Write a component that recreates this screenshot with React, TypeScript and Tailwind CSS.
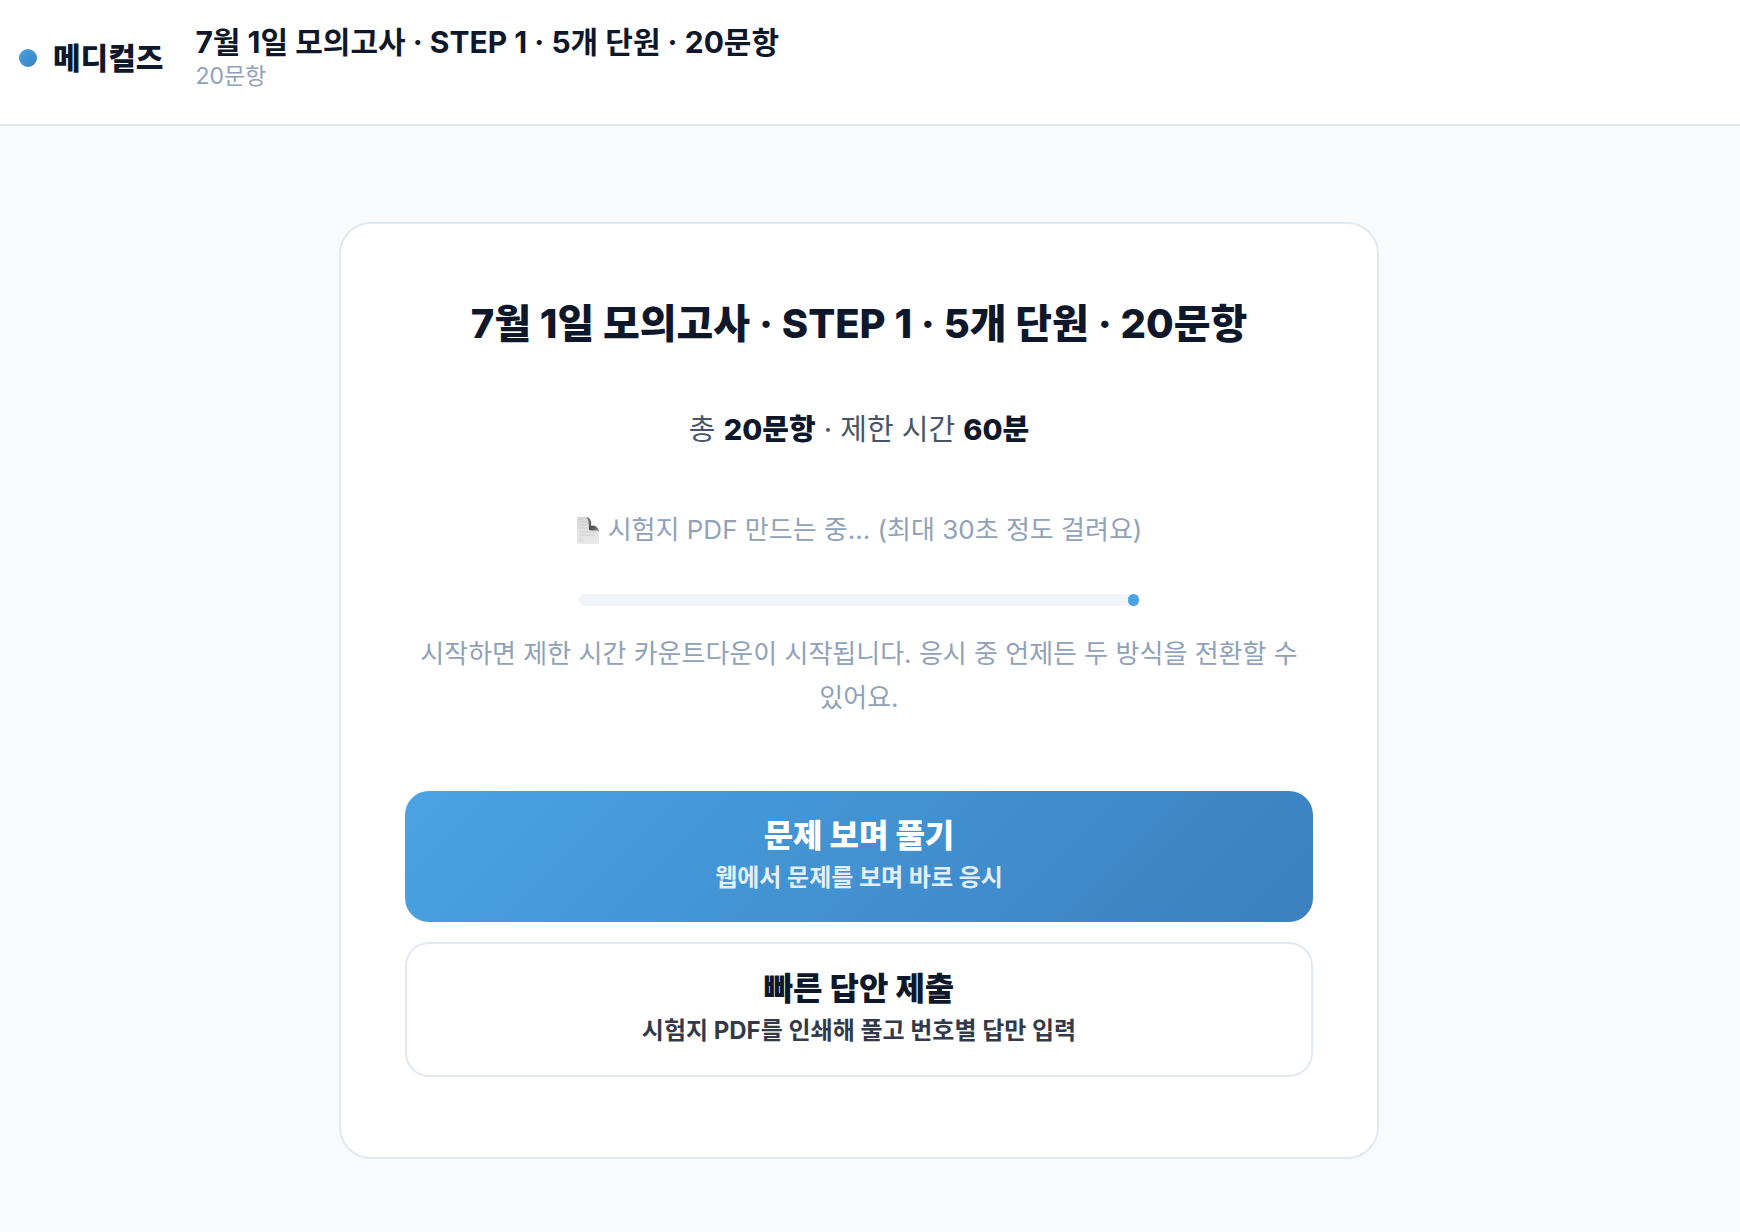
const exam = {
  title: "7월 1일 모의고사 · STEP 1 · 5개 단원 · 20문항",
  questions: "20문항",
  limit: "60분",
};

function PageIcon() {
  return (
    <svg width="24" height="27" viewBox="0 0 24 27" aria-hidden="true">
      <defs>
        <linearGradient id="sheet" x1="0" y1="0" x2="0" y2="1">
          <stop offset="0" stopColor="#d6d6d6" />
          <stop offset="0.5" stopColor="#e2e2e2" />
          <stop offset="1" stopColor="#e9e9e9" />
        </linearGradient>
        <linearGradient id="fold" x1="0" y1="0" x2="1" y2="1">
          <stop offset="0" stopColor="#8a8a8a" />
          <stop offset="0.6" stopColor="#4f4f4f" />
          <stop offset="1" stopColor="#8f8f8f" />
        </linearGradient>
      </defs>
      <path d="M1 0H11C14 2 15 5 15 8C19 8 22 10 23 13V27H1Z" fill="url(#sheet)" />
      <path
        d="M10 0C14 0 16 4 15 9C19 8 22 10 23 14C20 13 17 14 13 13C13 8 13 3 10 0Z"
        fill="url(#fold)"
      />
      <path
        d="M3 2H7M3 5H11M3 8H11M3 11H11M3 15H19M3 18H19M3 22H6M3 24H8"
        stroke="#cdcdcd"
        strokeWidth="0.8"
      />
    </svg>
  );
}

function Header() {
  return (
    <header className="flex items-center gap-8 border-b-2 border-slate-200 bg-white px-[19px] pt-6 pb-8">
      <a href="#" className="flex items-center gap-4">
        <span className="size-[18px] rounded-full bg-linear-135 from-[#4ba3e3] to-[#3a80c0]" />
        <span className="text-[30px] leading-9 font-extrabold">메디컬즈</span>
      </a>
      <div>
        <div className="text-[30px] leading-9 font-bold">{exam.title}</div>
        <div className="text-[23px] leading-8 text-slate-400">{exam.questions}</div>
      </div>
    </header>
  );
}

export default function App() {
  return (
    <div className="min-h-screen bg-slate-50 font-['Inter','Noto_Sans_CJK_KR',sans-serif] text-slate-900">
      <Header />
      <main className="py-24 pr-[22px]">
        <section className="mx-auto max-w-[1040px] rounded-[32px] border-2 border-slate-200 bg-white px-16 py-20 text-center">
          <h1 className="text-[40px] leading-10 font-extrabold">{exam.title}</h1>

          <p className="mt-16 text-[29px] leading-11 text-slate-600">
            총 <strong className="font-extrabold text-slate-900">{exam.questions}</strong> · 제한 시간{" "}
            <strong className="font-extrabold text-slate-900">{exam.limit}</strong>
          </p>

          <div className="mt-14 flex items-center justify-center gap-2 text-[26px] leading-11 text-slate-400">
            <PageIcon />
            <span>시험지 PDF 만드는 중... (최대 30초 정도 걸려요)</span>
          </div>
          <div
            role="progressbar"
            aria-label="시험지 PDF 만드는 중"
            className="mx-auto mt-[42px] flex h-3 max-w-[560px] justify-end rounded-full bg-slate-100"
          >
            <div className="h-3 w-[11px] rounded-full bg-[#4ba3e3]" />
          </div>

          <p className="mt-[26px] text-[26px] leading-11 text-slate-400">
            시작하면 제한 시간 카운트다운이 시작됩니다. 응시 중 언제든 두 방식을 전환할 수 있어요.
          </p>

          <div className="mt-[71px] flex flex-col gap-5">
            <button
              type="button"
              className="rounded-3xl bg-linear-135 from-[#4ba3e3] to-[#3a80c0] px-8 pt-[21px] pb-[26px] text-white"
            >
              <span className="block text-[32px] leading-12 font-extrabold">문제 보며 풀기</span>
              <span className="block text-2xl leading-9 font-bold opacity-85">
                웹에서 문제를 보며 바로 응시
              </span>
            </button>
            <button
              type="button"
              className="rounded-3xl border-2 border-slate-200 bg-white px-8 pt-[21px] pb-[26px]"
            >
              <span className="block text-[32px] leading-12 font-extrabold">빠른 답안 제출</span>
              <span className="block text-2xl leading-9 font-bold opacity-85">
                시험지 PDF를 인쇄해 풀고 번호별 답만 입력
              </span>
            </button>
          </div>
        </section>
      </main>
    </div>
  );
}
